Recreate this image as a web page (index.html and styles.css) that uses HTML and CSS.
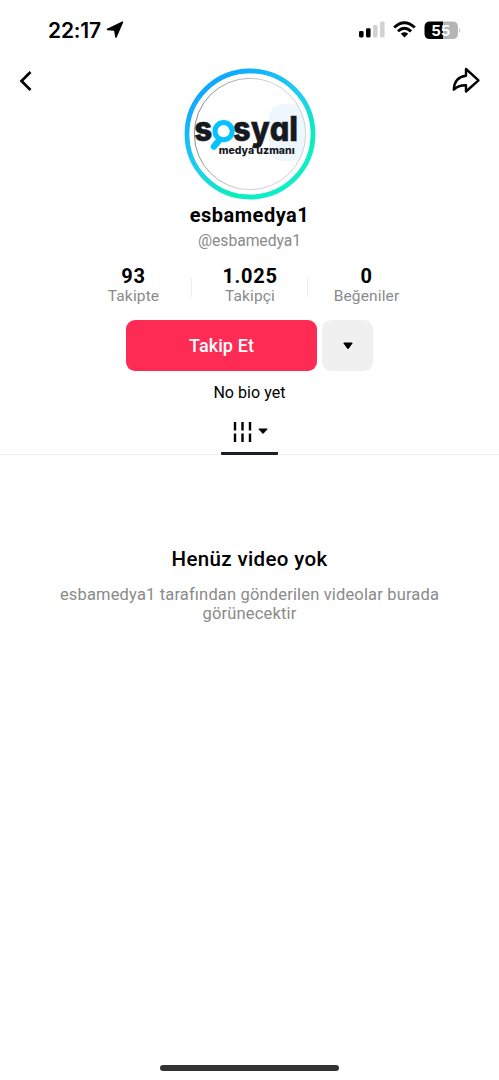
FILE: index.html
```html
<!DOCTYPE html>
<html lang="tr">
<head>
<meta charset="utf-8">
<meta name="viewport" content="width=device-width, initial-scale=1">
<title>esbamedya1</title>
<link rel="stylesheet" href="styles.css">
</head>
<body>
<div class="screen">
  <div class="status">
    <span class="time">22:17</span>
    <svg class="location" width="18" height="18" viewBox="0 0 18 18"><path d="M16.4 1.2 L10 16 L9 10 L8 9 L1.5 8.4Z" stroke="#000" stroke-width="1.6" stroke-linejoin="round"/></svg>
    <svg class="signal" width="27" height="18" viewBox="0 0 27 18"><rect x="0" y="10" width="4.6" height="6.5" rx="1.4"/><rect x="7" y="7.2" width="4.6" height="9.3" rx="1.4"/><g fill="#d2d2d2"><rect x="14" y="4" width="4.6" height="12.5" rx="1.4"/><rect x="21" y="0.5" width="4.6" height="16" rx="1.4"/></g></svg>
    <svg class="wifi" width="23" height="18" viewBox="0 0 23 18"><g fill="none" stroke="#000" stroke-width="2.9"><path d="M1.2 6.5 Q11.3-3 21.8 6.5"/><path d="M4.9 10.3 Q11.4 4.3 18.1 10.3"/></g><path d="M7.8 12.7 Q11.4 9.8 15.2 12.7 L11.5 16.6Z"/></svg>
    <svg class="battery" width="37" height="19" viewBox="0 0 37 19"><path d="M19 .5H28.5Q34 .5 34 6V12.5Q34 18 28.5 18H19Z" fill="#b5b5b5"/><path d="M19 .5H6Q.5.5.5 6V12.5Q.5 18 6 18H19Z"/><path d="M35 7Q37 9.3 35 11.8Z" fill="#b5b5b5"/><text x="7.2" y="15" textLength="19.2" fill="#fff" class="charge">55</text></svg>
  </div>

  <header class="top">
    <svg class="back" width="14" height="22" viewBox="0 0 14 22"><path d="M11.5 2 L2.5 11 L11.5 20" fill="none" stroke="#000" stroke-width="2.7"/></svg>
    <svg class="avatar" width="132" height="132" viewBox="0 0 132 132">
      <defs>
        <linearGradient id="ring" x1=".2" y1=".1" x2=".8" y2=".9"><stop offset="0" stop-color="#10a8ff"/><stop offset=".48" stop-color="#20cfee"/><stop offset=".82" stop-color="#08efba"/><stop offset="1" stop-color="#10eec8"/></linearGradient>
        <linearGradient id="hair" x1="0" y1=".4" x2="1" y2=".6"><stop offset="0" stop-color="#777"/><stop offset=".55" stop-color="#ccc"/><stop offset="1" stop-color="#ccc"/></linearGradient>
      </defs>
      <circle cx="66" cy="66" r="63" fill="#fff" stroke="url(#ring)" stroke-width="4.8"/>
      <rect x="85" y="36" width="36" height="57" rx="14" fill="#eff7fe"/>
      <circle cx="66" cy="66" r="58" fill="none" stroke="#fff" stroke-width="4.5"/>
      <circle cx="66" cy="66" r="55.7" fill="none" stroke="url(#hair)" stroke-width=".9"/>
      <g class="wordmark"><text x="10.2" y="73" textLength="18" lengthAdjust="spacingAndGlyphs">s</text><text x="49" y="73" textLength="65" lengthAdjust="spacingAndGlyphs">syɑl</text></g>
      <path d="M35 72.5 L30 78.5" stroke="#04c1ff" stroke-width="6.5" stroke-linecap="round"/>
      <circle cx="39.6" cy="63.2" r="8.6" fill="#fff" stroke="#04c1ff" stroke-width="5"/>
      <text class="tagline" x="34.7" y="85.5" textLength="76" lengthAdjust="spacingAndGlyphs">medya uzmanı</text>
    </svg>
    <svg class="share" width="29" height="27" viewBox="0 0 29 27"><path d="M14 2 L26.5 13.3 L14 24.5 V18.2 C8.3 18 5 19.4 1.8 22.7 C2.2 13.8 6 9.6 14 8.7Z" fill="none" stroke="#000" stroke-width="2.4" stroke-linejoin="round"/></svg>
  </header>

  <h1 class="name">esbamedya1</h1>
  <p class="handle">@esbamedya1</p>

  <div class="stats">
    <div class="stat"><b>93</b><span>Takipte</span></div>
    <div class="stat"><b>1.025</b><span>Takipçi</span></div>
    <div class="stat"><b>0</b><span>Beğeniler</span></div>
  </div>

  <div class="actions">
    <button class="follow">Takip Et</button>
    <button class="more" aria-label="Öneriler"><svg width="10" height="8" viewBox="0 0 10 8"><path d="M.8 1H9.2L5.4 6.4Q5 7 4.6 6.4Z" stroke="#000" stroke-linejoin="round"/></svg></button>
  </div>
  <p class="bio">No bio yet</p>

  <nav class="tabs">
    <div class="tab">
      <svg width="20" height="22" viewBox="0 0 20 22"><path d="M2 1V9.5M9.5 1V9.5M17 1V9.5M2 12.5V21M9.5 12.5V21M17 12.5V21" stroke="#000" stroke-width="2.4"/></svg>
      <svg class="caret" width="10" height="7" viewBox="0 0 10 7"><path d="M.8 1H9.2L5 5.5Z" stroke="#000" stroke-linejoin="round"/></svg>
    </div>
  </nav>

  <section class="empty">
    <h2>Henüz video yok</h2>
    <p>esbamedya1 tarafından gönderilen videolar burada<br>görünecektir</p>
  </section>
  <div class="home"></div>
</div>
</body>
</html>
```
FILE: styles.css
```css
* { box-sizing: border-box; }
body { margin: 0; background: #fff; font-family: Roboto, "Noto Sans", sans-serif; color: #000; }
h1, h2, p { margin: 0; }
svg { display: block; flex: none; }
button { border: 0; padding: 0; font: inherit; display: flex; align-items: center; justify-content: center; }
.screen { height: 1080px; display: flex; flex-direction: column; overflow: hidden; }
.status { height: 60px; flex: none; display: flex; align-items: center; padding: 0 38px 0 48px; }
.time { font: 600 21px/24px Inter, sans-serif; width: 54px; letter-spacing: -.2px; white-space: nowrap; padding-top: 1px; }
.location { margin-left: 4px; }
.signal { margin-left: auto; }
.wifi { margin-left: 7px; }
.battery { margin-left: 8px; }
.charge { font: 700 15px Inter, sans-serif; }
.top { display: grid; grid-template-columns: 1fr 132px 1fr; padding: 8px 18.5px 0 18.5px; height: 144px; flex: none; }
.back { margin-top: 2px; }
.share { justify-self: end; margin-top: -1px; }
.wordmark { font: 800 34px Inter, sans-serif; fill: #16191e; stroke: #16191e; stroke-width: .5px; }
.tagline { font: 800 10.5px Inter, sans-serif; fill: #16191e; }
.name { font-size: 20px; line-height: 24px; font-weight: 700; text-align: center; letter-spacing: .5px; margin-top: -1px; }
.handle { font-size: 15.7px; line-height: 20px; color: #8a8a8a; text-align: center; letter-spacing: -.05px; margin-top: 4px; }
.stats { display: grid; grid-template-columns: repeat(3, 116.5px); justify-content: center; margin-top: 14px; height: 43px; padding-left: 1px; }
.stat { display: flex; flex-direction: column; align-items: center; background: linear-gradient(#ededed, #ededed) right 13px / 1px 19px no-repeat; }
.stat:last-child { background: none; }
.stat b { font-size: 20px; line-height: 22px; letter-spacing: .7px; }
.stat span { font-size: 15.5px; line-height: 18px; color: #8a8a8a; letter-spacing: .15px; }
.actions { display: flex; gap: 5px; margin: 12px 0 0 126px; }
.follow { width: 191px; height: 51px; border-radius: 9px; background: #fe2c55; color: #fff; font-size: 18px; font-weight: 500; letter-spacing: .1px; }
.more { width: 51px; height: 51px; border-radius: 9px; background: #f0f0f0; }
.bio { font-size: 16px; line-height: 20px; text-align: center; letter-spacing: .05px; margin-top: 12px; }
.tabs { display: flex; justify-content: center; height: 52px; border-bottom: 1px solid #eee; }
.tab { width: 57px; height: 52px; border-bottom: 3px solid #1b1f25; display: flex; align-items: center; padding: 8px 0 0 12px; gap: 5px; border-radius: 1px; }
.empty { text-align: center; margin-top: 90px; }
.empty h2 { font-size: 20.5px; line-height: 28px; font-weight: 500; letter-spacing: .35px; }
.empty p { font-size: 16.5px; line-height: 19px; color: #8a8a8a; letter-spacing: .16px; margin-top: 12px; white-space: nowrap; }
.home { width: 179px; height: 6px; border-radius: 3px; background: #333; margin: auto auto 9px; }
```
